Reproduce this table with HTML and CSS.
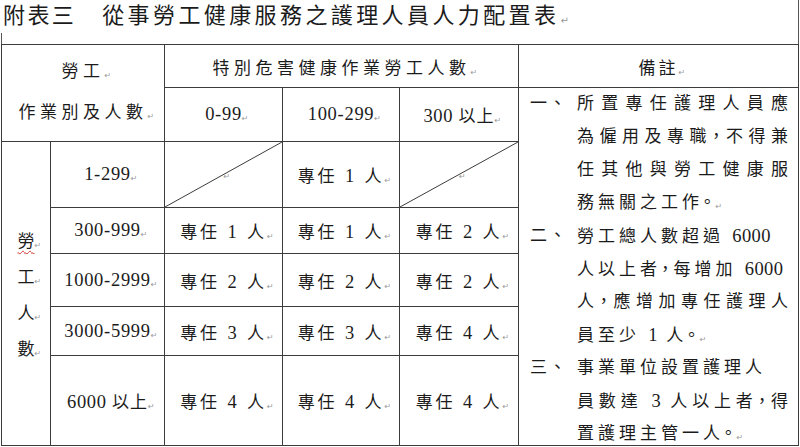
FILE: index.html
```html
<!DOCTYPE html>
<html lang="zh-Hant">
<head>
<meta charset="utf-8">
<title>附表三 從事勞工健康服務之護理人員人力配置表</title>
<link rel="stylesheet" href="styles.css">
</head>
<body>
<div class="page">
  <div class="title"><span class="t1">附表三</span><span class="t2">從事勞工健康服務之護理人員人力配置表</span><span class="pm">↵</span></div>
  <div class="grid">
    <div class="cell corner"><div>勞工<span class="pm">↵</span></div><div>作業別及人數<span class="pm">↵</span></div></div>
    <div class="cell h1"><span class="in">特別危害健康作業勞工人數<span class="pm">↵</span></span></div>
    <div class="cell notes-h"><span class="in">備註<span class="pm">↵</span></span></div>
    <div class="cell num h2 c3"><span class="in">0-99<span class="pm">↵</span></span></div>
    <div class="cell num h2 c4"><span class="in">100-299<span class="pm">↵</span></span></div>
    <div class="cell num h2 c5"><span class="in">300 <span class="zh">以上</span><span class="pm">↵</span></span></div>
    <div class="cell side"><div><span class="wavy">勞</span><span class="pm">↵</span></div><div>工<span class="pm">↵</span></div><div>人<span class="pm">↵</span></div><div>數<span class="pm">↵</span></div></div>

    <div class="cell num r3 c2"><span class="in">1-299<span class="pm">↵</span></span></div>
    <div class="cell r3 c3 diag"><svg class="slash" viewBox="0 0 100 100" preserveAspectRatio="none"><line x1="0" y1="100" x2="100" y2="0" vector-effect="non-scaling-stroke"/></svg><span class="pm">↵</span></div>
    <div class="cell val r3 c4"><span class="in">專任 <span class="d">1</span> 人<span class="pm">↵</span></span></div>
    <div class="cell r3 c5 diag"><svg class="slash" viewBox="0 0 100 100" preserveAspectRatio="none"><line x1="0" y1="100" x2="100" y2="0" vector-effect="non-scaling-stroke"/></svg><span class="pm">↵</span></div>

    <div class="cell num r4 c2"><span class="in">300-999<span class="pm">↵</span></span></div>
    <div class="cell val r4 c3"><span class="in">專任 <span class="d">1</span> 人<span class="pm">↵</span></span></div>
    <div class="cell val r4 c4"><span class="in">專任 <span class="d">1</span> 人<span class="pm">↵</span></span></div>
    <div class="cell val r4 c5"><span class="in">專任 <span class="d">2</span> 人<span class="pm">↵</span></span></div>

    <div class="cell num r5 c2"><span class="in">1000-2999<span class="pm">↵</span></span></div>
    <div class="cell val r5 c3"><span class="in">專任 <span class="d">2</span> 人<span class="pm">↵</span></span></div>
    <div class="cell val r5 c4"><span class="in">專任 <span class="d">2</span> 人<span class="pm">↵</span></span></div>
    <div class="cell val r5 c5"><span class="in">專任 <span class="d">2</span> 人<span class="pm">↵</span></span></div>

    <div class="cell num r6 c2"><span class="in">3000-5999<span class="pm">↵</span></span></div>
    <div class="cell val r6 c3"><span class="in">專任 <span class="d">3</span> 人<span class="pm">↵</span></span></div>
    <div class="cell val r6 c4"><span class="in">專任 <span class="d">3</span> 人<span class="pm">↵</span></span></div>
    <div class="cell val r6 c5"><span class="in">專任 <span class="d">4</span> 人<span class="pm">↵</span></span></div>

    <div class="cell num r7 c2"><span class="in">6000 <span class="zh">以上</span><span class="pm">↵</span></span></div>
    <div class="cell val r7 c3"><span class="in">專任 <span class="d">4</span> 人<span class="pm">↵</span></span></div>
    <div class="cell val r7 c4"><span class="in">專任 <span class="d">4</span> 人<span class="pm">↵</span></span></div>
    <div class="cell val r7 c5"><span class="in">專任 <span class="d">4</span> 人<span class="pm">↵</span></span></div>

    <div class="cell notes">
      <div class="item">
        <div class="mark">一、</div>
        <div class="lines">
          <div class="ln just">所置專任護理人員應</div>
          <div class="ln just">為僱用及專職，不得兼</div>
          <div class="ln just">任其他與勞工健康服</div>
          <div class="ln">務無關之工作。<span class="pm">↵</span></div>
        </div>
      </div>
      <div class="item">
        <div class="mark">二、</div>
        <div class="lines">
          <div class="ln">勞工總人數超過 <span class="d">6000</span></div>
          <div class="ln">人以上者，每增加 <span class="d">6000</span></div>
          <div class="ln just">人，應增加專任護理人</div>
          <div class="ln">員至少 <span class="d">1</span> 人。<span class="pm">↵</span></div>
        </div>
      </div>
      <div class="item">
        <div class="mark">三、</div>
        <div class="lines">
          <div class="ln">事業單位設置護理人</div>
          <div class="ln just">員數達 <span class="d">3</span> 人以上者，得</div>
          <div class="ln">置護理主管一人。<span class="pm">↵</span></div>
        </div>
      </div>
    </div>
  </div>
</div>
</body>
</html>
```

FILE: styles.css
```css
html, body {
  margin: 0;
  padding: 0;
  background: #ffffff;
}

body {
  font-family: "Liberation Serif", "Noto Sans CJK TC", serif;
  color: #1b1b1b;
  width: 800px;
  height: 447px;
  overflow: hidden;
}

.page {
  width: 800px;
}

.title {
  position: relative;
  height: 44px;
  box-sizing: border-box;
  padding-left: 3px;
  line-height: 32px;
  font-size: 22px;
  letter-spacing: 3.4px;
  white-space: nowrap;
  border-right: 1px solid #555;
  width: 799px;
}

.title::before {
  content: "";
  position: absolute;
  left: 1px;
  bottom: 0;
  width: 1px;
  height: 11px;
  background: #555;
}

.t1 {
  margin-right: 26px;
  letter-spacing: 2.4px;
}

.pm {
  display: inline-block;
  width: 0;
  font-family: "DejaVu Sans", sans-serif;
  font-size: 8px;
  letter-spacing: 0;
  color: #9a9a9a;
  vertical-align: -1px;
  overflow: visible;
}

.title .pm {
  margin-left: 1px;
  font-size: 10px;
}

.grid {
  margin-left: 1px;
  width: 798px;
  box-sizing: border-box;
  padding: 1px;
  display: grid;
  grid-template-columns: 48px 113px 117px 116px 118px 279px;
  grid-template-rows: 42px 53px 65px 45px 52px 48px 89px;
  gap: 1px;
  background: #3c3c3c;
}

.cell {
  background: #ffffff;
  display: flex;
  align-items: center;
  justify-content: center;
  font-size: 17px;
  white-space: nowrap;
  position: relative;
}

.in {
  white-space: pre;
}

.corner {
  grid-column: 1 / 3;
  grid-row: 1 / 3;
  flex-direction: column;
  line-height: 37px;
  letter-spacing: 4.5px;
  padding-top: 1px;
}

.h1 {
  grid-column: 3 / 6;
  grid-row: 1;
  letter-spacing: 4.5px;
}

.notes-h {
  grid-column: 6;
  grid-row: 1;
  letter-spacing: 3px;
}

.num {
  font-size: 18.5px;
  letter-spacing: 0.7px;
}

.num .zh {
  font-size: 17px;
  letter-spacing: 1px;
}

.val {
  letter-spacing: 3px;
}

.d {
  font-size: 18.5px;
  letter-spacing: 0.4px;
}

.val .d {
  letter-spacing: 3px;
}

.side {
  grid-column: 1;
  grid-row: 3 / 8;
  flex-direction: column;
  line-height: 32px;
  padding-top: 8px;
}

.wavy {
  text-decoration: underline wavy #d03030;
  text-decoration-thickness: 1px;
  text-underline-offset: 3px;
}

.h2 { grid-row: 2; }
.r3 { grid-row: 3; }
.r4 { grid-row: 4; }
.r5 { grid-row: 5; }
.r6 { grid-row: 6; }
.r7 { grid-row: 7; }
.c2 { grid-column: 2; }
.c3 { grid-column: 3; }
.c4 { grid-column: 4; }
.c5 { grid-column: 5; }

.diag .pm {
  margin-top: 4px;
}

.slash {
  position: absolute;
  left: 0;
  top: 0;
  width: 100%;
  height: 100%;
}

.slash line {
  stroke: #3c3c3c;
  stroke-width: 1;
}

.notes {
  grid-column: 6;
  grid-row: 2 / 8;
  flex-direction: column;
  align-items: stretch;
  justify-content: flex-start;
  padding: 0 9px 0 11px;
  font-feature-settings: "halt";
}

.item {
  display: flex;
}

.mark {
  width: 47px;
  flex: none;
  height: 33px;
  line-height: 32px;
  letter-spacing: 2px;
  font-feature-settings: normal;
}

.lines {
  width: 211px;
  letter-spacing: 4px;
}

.ln {
  height: 33px;
  line-height: 32px;
  overflow: visible;
}

.ln.just {
  text-align: justify;
  text-align-last: justify;
  letter-spacing: 0;
}
```
